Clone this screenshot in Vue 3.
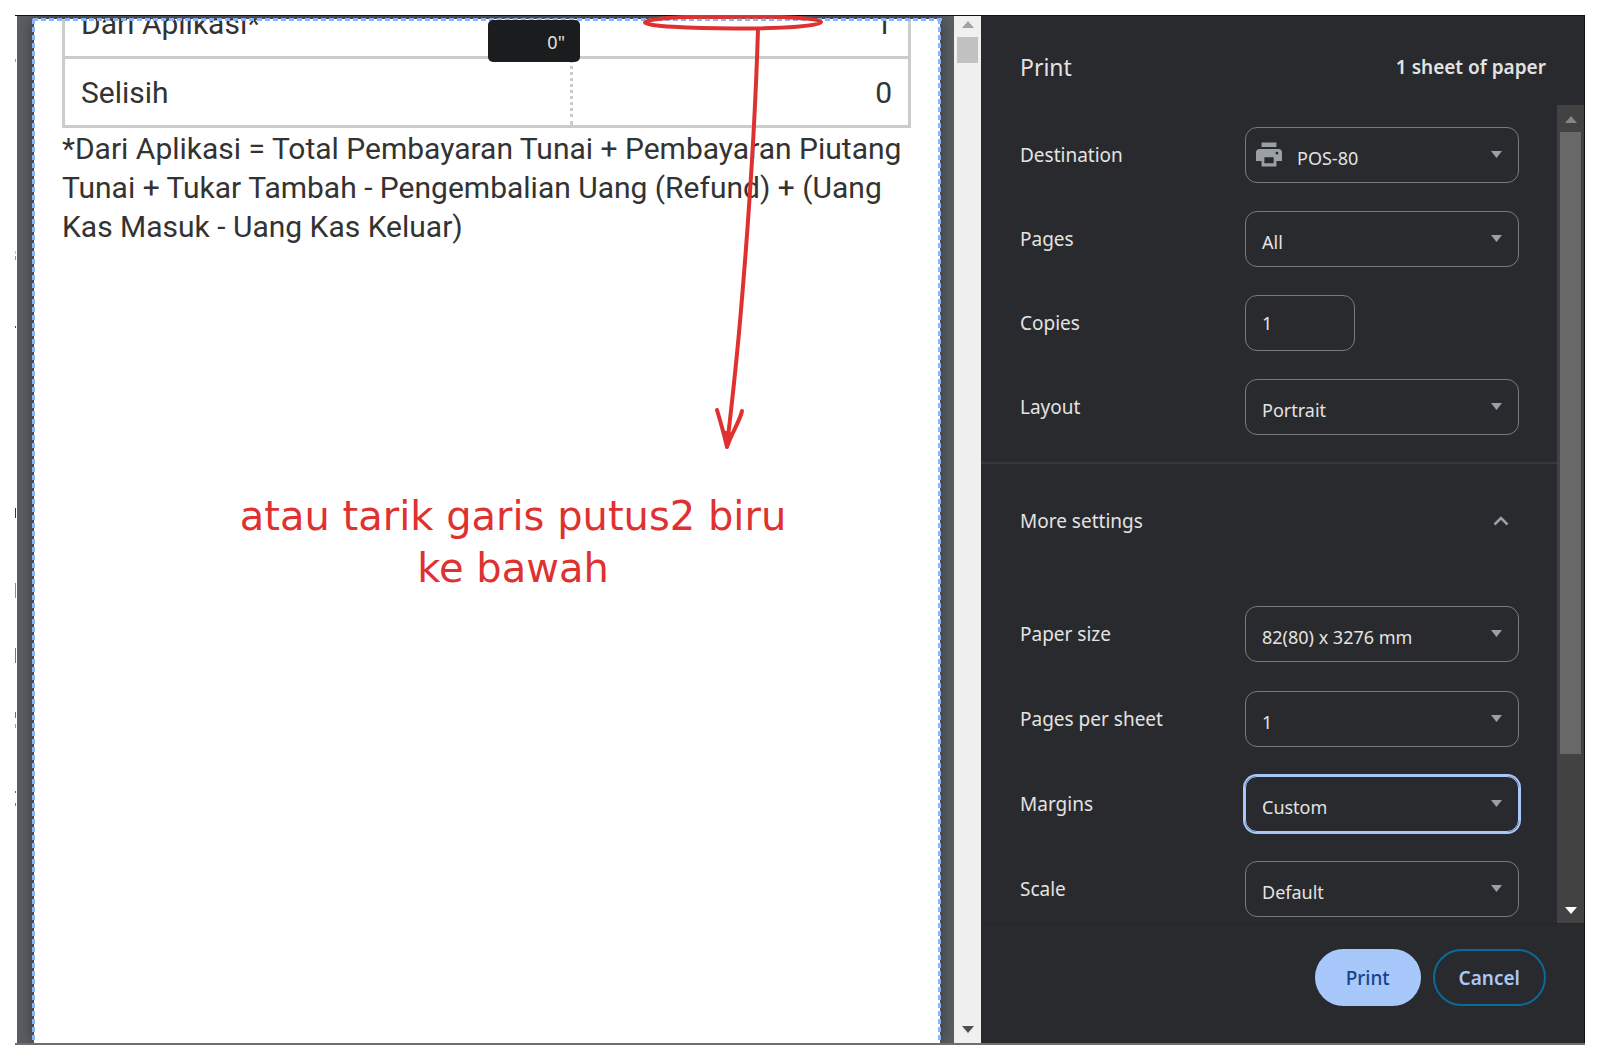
<script setup>
import { ref } from 'vue'

const basic = ref([
  { id: 'destination', label: 'Destination', value: 'POS-80', icon: true },
  { id: 'pages', label: 'Pages', value: 'All' },
  { id: 'copies', label: 'Copies', value: '1', input: true },
  { id: 'layout', label: 'Layout', value: 'Portrait' },
])

const advanced = ref([
  { id: 'paper', label: 'Paper size', value: '82(80) x 3276 mm' },
  { id: 'per-sheet', label: 'Pages per sheet', value: '1' },
  { id: 'margins', label: 'Margins', value: 'Custom', focused: true },
  { id: 'scale', label: 'Scale', value: 'Default' },
])

const groups = [basic, advanced]

const specks = [
  { y: 43, h: 3, c: '#5fb4d8' },
  { y: 235, h: 3, c: '#e3bd80' },
  { y: 240, h: 4, c: '#c98a2e' },
  { y: 310, h: 2, c: '#444' },
  { y: 492, h: 10, c: '#2b3550' },
  { y: 567, h: 15, c: '#4a9cc9' },
  { y: 632, h: 15, c: '#3f86b0' },
  { y: 696, h: 6, c: '#4f7590' },
  { y: 708, h: 4, c: '#7fa5bd' },
  { y: 775, h: 2, c: '#666' },
  { y: 787, h: 3, c: '#8a7550' },
]
</script>

<template>
  <div class="dialog">
    <section class="preview" aria-label="Print preview">
      <svg class="specks" width="2" height="1028" aria-hidden="true">
        <rect v-for="s in specks" :key="s.y" x="0" :y="s.y" width="1" :height="s.h" :fill="s.c" />
      </svg>

      <div class="canvas">
        <div class="sheet">
          <div class="receipt">
            <table>
              <tbody>
                <tr>
                  <td>Dari Aplikasi*</td>
                  <td class="num">1</td>
                </tr>
                <tr>
                  <td>Selisih</td>
                  <td class="num">0</td>
                </tr>
              </tbody>
            </table>
            <p class="note">
              *Dari Aplikasi = Total Pembayaran Tunai + Pembayaran Piutang<br />
              Tunai + Tukar Tambah - Pengembalian Uang (Refund) + (Uang<br />
              Kas Masuk - Uang Kas Keluar)
            </p>
          </div>
        </div>
        <i class="guide top"></i>
        <i class="guide left"></i>
        <i class="guide right"></i>
        <output class="badge">0"</output>
        <svg class="ink" width="938" height="460" viewBox="16 15 938 460" aria-hidden="true">
          <g fill="none" stroke="#e03131" stroke-linecap="round" stroke-linejoin="round">
            <path stroke-width="4" d="M724 16.500 C680 16 645 19 645 22.500 C645 26 690 28.500 735 28.500 C785 28.500 821 26 821 22 C821 18 775 15.500 715 17" />
            <path stroke-width="4" d="M758 29 C755 130 747 240 741 310 C736 370 731 410 727 446" />
            <path stroke-width="4" d="M717 410 C720 420 724 434 727 447 C731 434 740 421 742 411" />
            <path stroke-width="3" d="M724 432 L727 444 L731 434 Z" fill="#e03131" />
          </g>
        </svg>
        <p class="caption">atau tarik garis putus2 biru<br />ke bawah</p>
      </div>

      <div class="bar light">
        <svg width="12" height="7" viewBox="0 0 12 7"><path d="M0 7 6 0 12 7Z" fill="#a3a3a3" /></svg>
        <i class="thumb"></i>
        <svg class="end" width="12" height="7" viewBox="0 0 12 7"><path d="M0 0 6 7 12 0Z" fill="#505050" /></svg>
      </div>
    </section>

    <aside class="sidebar">
      <header class="head">
        <h1>Print</h1>
        <span class="count">1 sheet of paper</span>
      </header>

      <div class="body">
        <div class="settings">
          <template v-for="(group, g) in groups" :key="g">
            <button v-if="g === 1" type="button" class="more" aria-expanded="true">
              More settings
              <svg width="16" height="11" viewBox="0 0 16 11"><path d="M1.500 9.500 8 3 14.500 9.500" fill="none" stroke="#9aa0a6" stroke-width="2.500" /></svg>
            </button>
            <div class="group">
              <div v-for="row in group.value" :key="row.id" class="row">
                <label :for="row.id">{{ row.label }}</label>
                <input v-if="row.input" :id="row.id" v-model="row.value" class="field copies" type="text" />
                <div v-else class="pick">
                  <svg v-if="row.icon" class="printer" width="26" height="25" viewBox="0 0 28 26" aria-hidden="true">
                    <path fill="#9aa0a6" fill-rule="evenodd" d="M6 0H22V5H6ZM4 7H24Q28 7 28 11V20H22V26H6V20H0V11Q0 7 4 7ZM9 16V22.500H19V16ZM22.500 10A1.500 1.500 0 1 0 22.600 13 A1.500 1.500 0 1 0 22.500 10Z" />
                  </svg>
                  <select :id="row.id" v-model="row.value" class="field" :class="{ iconic: row.icon, focused: row.focused }">
                    <option>{{ row.value }}</option>
                  </select>
                  <svg class="caret" width="11" height="7" viewBox="0 0 11 7" aria-hidden="true"><path d="M0 0H11L5.500 7Z" fill="#9aa0a6" /></svg>
                </div>
              </div>
            </div>
          </template>
        </div>
        <div class="bar dark">
          <svg width="12" height="7" viewBox="0 0 12 7"><path d="M0 7 6 0 12 7Z" fill="#868686" /></svg>
          <i class="thumb"></i>
          <svg class="end" width="12" height="7" viewBox="0 0 12 7"><path d="M0 0 6 7 12 0Z" fill="#fff" /></svg>
        </div>
      </div>

      <footer class="foot">
        <button type="button" class="btn primary">Print</button>
        <button type="button" class="btn">Cancel</button>
      </footer>
    </aside>
  </div>
</template>

<style>
html,
body {
  background: #fff;
  overflow: hidden;
}
</style>

<style scoped>
* {
  box-sizing: border-box;
}

.dialog {
  display: flex;
  height: calc(100vh - 31px);
  min-height: 600px;
  margin: 15px 15px 16px;
  border-top: 1px solid #111;
  border-bottom: 2px solid #6c706f;
  font-family: "Noto Sans", "Open Sans", sans-serif;
  color: #e3e3e3;
}

.preview {
  flex: 1;
  min-width: 0;
  display: flex;
}

.specks {
  flex: none;
}

.canvas {
  position: relative;
  flex: 1;
  display: flex;
  padding: 3px 14px 0 17px;
  background: #5b5f64;
}

.sheet {
  flex: 1;
  overflow: hidden;
  background: #fff;
  box-shadow: 0 0 16px #303338;
  clip-path: inset(-3px -14px 0 -17px);
}

.receipt {
  margin: -32px 29px 0 28px;
  color: #333;
  font: 30px/39px Roboto, sans-serif;
}

table {
  width: 100%;
  table-layout: fixed;
  border-collapse: collapse;
}

td {
  height: 69px;
  padding: 0 16px;
  border: 3px solid #ccc;
}

td:first-child {
  width: 60%;
  border-right: 3px dotted #ccc;
}

td.num {
  border-left: 3px dotted #ccc;
  text-align: right;
}

.note {
  margin: 1px 0 0;
  white-space: nowrap;
}

.guide {
  position: absolute;
}

.guide.top {
  top: 2px;
  left: 16px;
  right: 11px;
  height: 3px;
  background: repeating-linear-gradient(90deg, #8ab4f8 0 5px, transparent 5px 8px);
}

.guide.left,
.guide.right {
  top: 3px;
  bottom: 0;
  width: 3px;
  background: repeating-linear-gradient(#8ab4f8 0 5px, transparent 5px 8px);
}

.guide.left {
  left: 15px;
}

.guide.right {
  right: 13px;
}

.badge {
  position: absolute;
  top: 4px;
  left: 471px;
  width: 92px;
  height: 42px;
  padding-right: 15px;
  border-radius: 5px;
  background: #1b1c1e;
  text-align: right;
  font-size: 18px;
  line-height: 44px;
}

.ink {
  position: absolute;
  top: -1px;
  left: -1px;
}

.caption {
  position: absolute;
  top: 474px;
  left: 0;
  width: 992px;
  margin: 0;
  text-align: center;
  color: #e03131;
  font: 40px/52px Virgil, "DejaVu Sans", sans-serif;
}

.bar {
  flex: none;
  width: 27px;
  display: flex;
  flex-direction: column;
  align-items: center;
}

.bar svg,
.bar .thumb {
  flex: none;
}

.bar .end {
  margin-top: auto;
}

.light {
  padding: 5px 0 10px;
  background: #f0f0f0;
}

.light .thumb {
  width: 21px;
  height: 26px;
  margin-top: 9px;
  background: #c1c1c1;
}

.dark {
  padding: 11px 0 9px;
  background: #424242;
}

.dark .thumb {
  width: 21px;
  height: 78%;
  margin-top: 9px;
  background: #686868;
}

.sidebar {
  flex: none;
  width: 604px;
  display: flex;
  flex-direction: column;
  background: #292a2d;
  border-right: 1px solid #111;
}

.head {
  height: 89px;
  padding: 12px 38px 0 39px;
  display: flex;
  align-items: center;
  justify-content: space-between;
}

h1 {
  margin: 0;
  font-size: 23px;
  font-weight: 400;
}

.count {
  font-size: 19px;
  font-weight: 600;
}

.body {
  flex: 1;
  min-height: 0;
  display: flex;
  overflow: hidden;
}

.settings {
  flex: 1;
  overflow: hidden;
}

.group {
  display: flex;
  flex-direction: column;
  gap: 28px;
  padding: 22px 38px 0 39px;
}

.more + .group {
  gap: 29px;
}

.row {
  display: flex;
  align-items: center;
  justify-content: space-between;
}

.row label {
  width: 225px;
  font-size: 19px;
}

.pick {
  position: relative;
  flex: 1;
}

.field {
  display: block;
  width: 100%;
  height: 56px;
  margin: 0;
  padding: 6px 16px 0;
  border: 1px solid #7a7a7a;
  border-radius: 12px;
  outline: 0;
  appearance: none;
  background: transparent;
  color: #e3e3e3;
  font: 18px "Noto Sans", "Open Sans", sans-serif;
}

.field.iconic {
  padding-left: 51px;
}

.field.focused {
  border-color: #a8c7fa;
  box-shadow: 0 0 0 2px #a8c7fa;
}

.copies {
  width: 110px;
  margin-right: auto;
  padding-top: 0;
}

.printer {
  position: absolute;
  top: 15px;
  left: 11px;
}

.caret {
  position: absolute;
  top: 24px;
  right: 17px;
}

.more {
  display: flex;
  align-items: center;
  justify-content: space-between;
  width: 100%;
  height: 122px;
  margin-top: 27px;
  padding: 0 48px 7px 39px;
  border: 0;
  border-top: 2px solid #37383b;
  background: none;
  color: #e3e3e3;
  font: 19px "Noto Sans", "Open Sans", sans-serif;
}

.foot {
  height: 120px;
  padding: 25px 38px 0;
  display: flex;
  justify-content: flex-end;
  gap: 12px;
  border-top: 1px solid #242528;
}

.btn {
  height: 57px;
  padding: 0 24px;
  border: 2px solid #0b6a99;
  border-radius: 29px;
  background: transparent;
  color: #a8c7fa;
  font: 600 19px "Noto Sans", "Open Sans", sans-serif;
}

.btn.primary {
  padding: 0 29px;
  border-color: #a8c7fa;
  background: #a8c7fa;
  color: #174489;
  font-weight: 500;
}
</style>
